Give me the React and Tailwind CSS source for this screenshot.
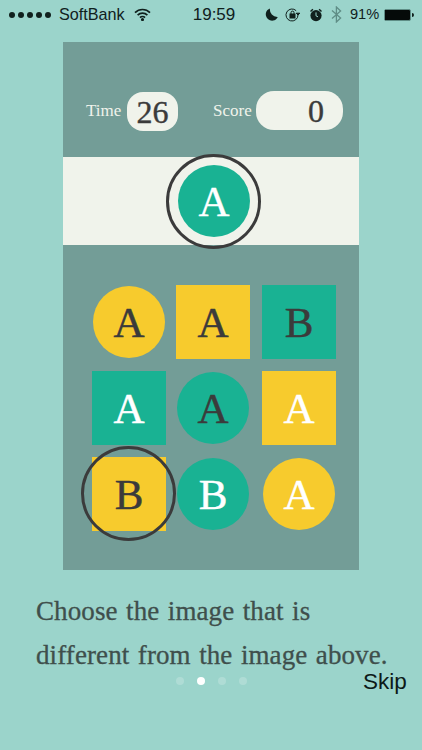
import React from "react";

const serif = "[font-family:'Liberation_Serif',serif]";

const cells = [
  { letter: "A", round: true, bg: "bg-[#f7cb2d]", color: "text-[#3b3b3b]" },
  { letter: "A", round: false, bg: "bg-[#f7cb2d]", color: "text-[#3b3b3b]" },
  { letter: "B", round: false, bg: "bg-[#19b293]", color: "text-[#3b3b3b]" },
  { letter: "A", round: false, bg: "bg-[#19b293]", color: "text-white" },
  { letter: "A", round: true, bg: "bg-[#19b293]", color: "text-[#3b3b3b]" },
  { letter: "A", round: false, bg: "bg-[#f7cb2d]", color: "text-white" },
  { letter: "B", round: false, bg: "bg-[#f7cb2d]", color: "text-[#3b3b3b]", ring: true },
  { letter: "B", round: true, bg: "bg-[#19b293]", color: "text-white" },
  { letter: "A", round: true, bg: "bg-[#f7cb2d]", color: "text-white" },
];

function StatusBar() {
  return (
    <div className="flex items-center h-[29px] pl-[9px] text-[#10201d] font-['Liberation_Sans',sans-serif] text-[16.2px]">
      <div className="flex gap-[3px] w-[43px]">
        {[0, 1, 2, 3, 4].map((i) => (
          <div key={i} className="w-[6px] h-[6px] rounded-full bg-[#10201d]" />
        ))}
      </div>
      <span className="ml-[7px] w-[68px] whitespace-nowrap">SoftBank</span>
      <svg className="ml-[7px]" width="17" height="13" viewBox="0 0 17 13" fill="none" stroke="#10201d" strokeWidth="1.7">
        <path d="M1 4.6a10.6 10.6 0 0 1 15 0" />
        <path d="M3.6 7.2a7 7 0 0 1 9.8 0" />
        <path d="M6 9.6a3.4 3.4 0 0 1 5 0" />
        <circle cx="8.5" cy="11.6" r="0.7" fill="#10201d" />
      </svg>
      <span className="ml-[41px] w-[44px] text-center font-medium text-[17px] whitespace-nowrap">19:59</span>
      <svg className="ml-[29px]" width="13" height="13" viewBox="0 0 13 13" fill="#10201d">
        <path d="M5 .4A6.3 6.3 0 1 0 12.8 9 7.4 7.4 0 0 1 5 .4z" />
      </svg>
      <svg className="ml-[7px]" width="16" height="14" viewBox="0 0 16 14" fill="none" stroke="#10201d" strokeWidth="1">
        <path d="M13 7a6 6 0 1 1-1.8-4.3" />
        <path d="M13 7l1.8-1.8H11.2z" fill="#10201d" />
        <rect x="5" y="6" width="5" height="4" fill="#10201d" />
        <path d="M6 6V4.6a1.5 1.5 0 0 1 3 0V6" />
      </svg>
      <svg className="ml-[8px]" width="14" height="14" viewBox="0 0 14 14" fill="#10201d">
        <circle cx="7" cy="7.6" r="5.6" />
        <path d="M1 3l2.4-2.2 1 1L2 4zM13 3L10.6.8l-1 1L12 4z" />
        <path d="M7 4.4v3.4l2 1" stroke="#9bd4cb" strokeWidth="1" fill="none" />
      </svg>
      <svg className="ml-[8px]" width="11" height="17" viewBox="0 0 11 17" fill="none" stroke="#5f8d86" strokeWidth="1.3">
        <path d="M1 4.6l8.6 7.4-4.2 4V1l4.2 4L1 12.4" />
      </svg>
      <span className="ml-[8px] w-[30px] whitespace-nowrap text-[14.6px]">91%</span>
      <div className="ml-[4px] flex items-center">
        <div className="w-[27px] h-[12px] rounded-[2px] border border-[#5f8d86] bg-[#050a09]">
          <div className="w-[91%] h-full bg-[#050a09]" />
        </div>
        <div className="w-[2px] h-[4px] ml-[1px] bg-[#10201d] rounded-r-sm" />
      </div>
    </div>
  );
}

function Cell({ letter, round, bg, color, ring }) {
  return (
    <div className="relative w-[74px] h-[74px] flex items-center justify-center">
      <div
        className={
          round
            ? `w-[72px] h-[72px] rounded-full flex items-center justify-center ${bg}`
            : `w-[74px] h-[74px] flex items-center justify-center ${bg}`
        }
      >
        <span className={`${serif} text-[43px] leading-none [-webkit-text-stroke:0.5px] ${color}`}>{letter}</span>
      </div>
      {ring && (
        <div className="absolute left-[-11px] top-[-11px] w-[95px] h-[95px] rounded-full border-[3px] border-[#3b3b3b]" />
      )}
    </div>
  );
}

export default function App() {
  return (
    <div className="w-[422px] h-[750px] bg-[#9bd4cb] overflow-hidden relative">
      <StatusBar />
      <div className="mt-[13px] ml-[63px] w-[296px] h-[528px] bg-[#739d97]">
        <div className={`${serif} flex items-center pt-[49px] pb-[26px] pl-[23px] text-[#f0f3eb] text-[17px]`}>
          <span className="w-[41px]">Time</span>
          <div className="w-[51px] h-[39px] mt-[1px] rounded-[16px] bg-[#f0f3eb] flex items-center justify-center text-[#3b3b3b] text-[32px] [-webkit-text-stroke:0.4px]">
            26
          </div>
          <span className="ml-[35px] w-[43px]">Score</span>
          <div className="w-[87px] h-[39px] self-start rounded-[18px] bg-[#f0f3eb] flex items-center justify-end pr-[19px] text-[#3b3b3b] text-[32px] [-webkit-text-stroke:0.4px]">
            0
          </div>
        </div>
        <div className="relative h-[88px] bg-[#f0f3eb] flex items-center pl-[115px]">
          <div className="w-[72px] h-[72px] rounded-full bg-[#19b293] flex items-center justify-center">
            <span className={`${serif} text-[43px] leading-none text-white [-webkit-text-stroke:0.3px]`}>A</span>
          </div>
          <div className="absolute left-[103px] top-[-3px] w-[95px] h-[95px] rounded-full border-[3px] border-[#3b3b3b]" />
        </div>
        <div className="grid grid-cols-[84px_86px_74px] gap-y-[12px] mt-[40px] ml-[29px]">
          {cells.map((c, i) => (
            <Cell key={i} {...c} />
          ))}
        </div>
      </div>
      <div className={`${serif} ml-[36px] mt-[19px] text-[#3f4f4c] text-[27px] leading-[44px] tracking-[0.1px] [word-spacing:1.6px] whitespace-nowrap [-webkit-text-stroke:0.3px]`}>
        <div>Choose the image that is</div>
        <div>different from the image above.</div>
      </div>
      <div className="absolute left-[176px] top-[677px] flex gap-[13px]">
        {[0, 1, 2, 3].map((i) => (
          <div key={i} className={i === 1 ? "w-[8px] h-[8px] rounded-full bg-white" : "w-[8px] h-[8px] rounded-full bg-white/20"} />
        ))}
      </div>
      <div className="absolute left-[363px] top-[669px] font-['Liberation_Sans',sans-serif] text-[22.5px] leading-[26px] text-[#0d1a18]">
        Skip
      </div>
    </div>
  );
}
